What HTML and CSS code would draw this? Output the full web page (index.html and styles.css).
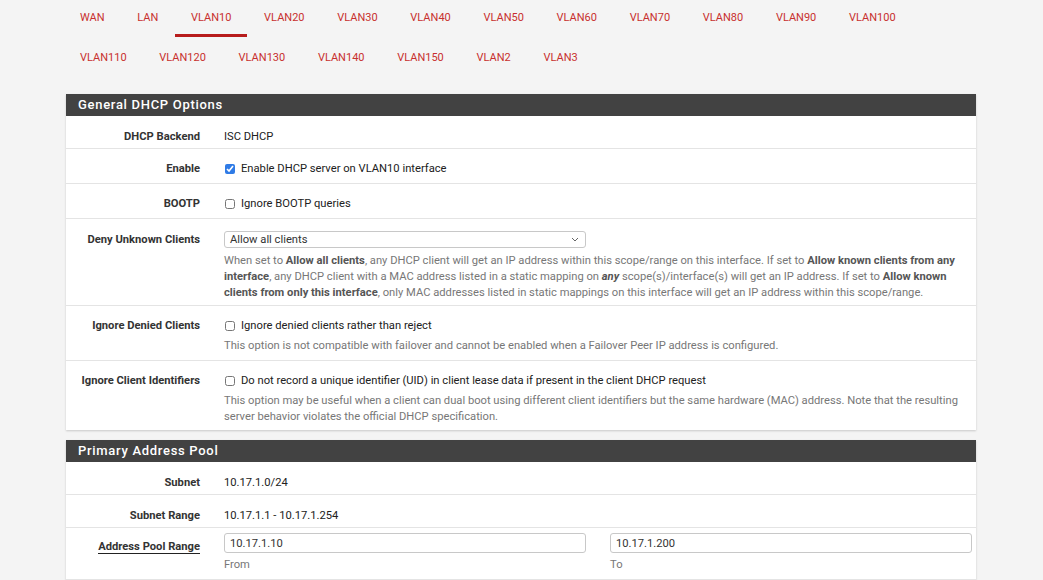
FILE: index.html
```html
<!DOCTYPE html>
<html lang="en">
<head>
<meta charset="utf-8">
<title>DHCP Server</title>
<link rel="stylesheet" href="styles.css">
</head>
<body>
<div class="page">
  <nav class="tabs">
    <a class="tab">WAN</a>
    <a class="tab">LAN</a>
    <a class="tab active">VLAN10</a>
    <a class="tab">VLAN20</a>
    <a class="tab">VLAN30</a>
    <a class="tab">VLAN40</a>
    <a class="tab">VLAN50</a>
    <a class="tab">VLAN60</a>
    <a class="tab">VLAN70</a>
    <a class="tab">VLAN80</a>
    <a class="tab">VLAN90</a>
    <a class="tab">VLAN100</a>
    <a class="tab">VLAN110</a>
    <a class="tab">VLAN120</a>
    <a class="tab">VLAN130</a>
    <a class="tab">VLAN140</a>
    <a class="tab">VLAN150</a>
    <a class="tab">VLAN2</a>
    <a class="tab">VLAN3</a>
  </nav>

  <section class="panel">
    <h2 class="panel-heading">General DHCP Options</h2>
    <div class="row static">
      <div class="label">DHCP Backend</div>
      <div class="value">ISC DHCP</div>
    </div>
    <div class="row check">
      <div class="label">Enable</div>
      <div class="value"><label class="cb"><input type="checkbox" checked><span>Enable DHCP server on VLAN10 interface</span></label></div>
    </div>
    <div class="row check">
      <div class="label">BOOTP</div>
      <div class="value"><label class="cb"><input type="checkbox"><span>Ignore BOOTP queries</span></label></div>
    </div>
    <div class="row select-row">
      <div class="label">Deny Unknown Clients</div>
      <div class="value">
        <div class="select"><span>Allow all clients</span><svg class="chev" width="8" height="5" viewBox="0 0 8 5"><path d="M1 1l3 3 3-3" fill="none" stroke="#666" stroke-width="1"/></svg></div>
        <p class="help help-select">When set to <b>Allow all clients</b>, any DHCP client will get an IP address within this scope/range on this interface. If set to <b>Allow known clients from any interface</b>, any DHCP client with a MAC address listed in a static mapping on <b><i>any</i></b> scope(s)/interface(s) will get an IP address. If set to <b>Allow known clients from only this interface</b>, only MAC addresses listed in static mappings on this interface will get an IP address within this scope/range.</p>
      </div>
    </div>
    <div class="row check help-row">
      <div class="label">Ignore Denied Clients</div>
      <div class="value">
        <label class="cb"><input type="checkbox"><span>Ignore denied clients rather than reject</span></label>
        <p class="help">This option is not compatible with failover and cannot be enabled when a Failover Peer IP address is configured.</p>
      </div>
    </div>
    <div class="row check help-row last">
      <div class="label">Ignore Client Identifiers</div>
      <div class="value">
        <label class="cb"><input type="checkbox"><span>Do not record a unique identifier (UID) in client lease data if present in the client DHCP request</span></label>
        <p class="help">This option may be useful when a client can dual boot using different client identifiers but the same hardware (MAC) address. Note that the resulting server behavior violates the official DHCP specification.</p>
      </div>
    </div>
  </section>

  <section class="panel">
    <h2 class="panel-heading">Primary Address Pool</h2>
    <div class="row static">
      <div class="label">Subnet</div>
      <div class="value">10.17.1.0/24</div>
    </div>
    <div class="row static">
      <div class="label">Subnet Range</div>
      <div class="value">10.17.1.1 - 10.17.1.254</div>
    </div>
    <div class="row range-row">
      <div class="label"><span class="ul">Address Pool Range</span></div>
      <div class="value range">
        <div class="field"><input class="input" type="text" value="10.17.1.10"><span class="sub">From</span></div>
        <div class="field"><input class="input" type="text" value="10.17.1.200"><span class="sub">To</span></div>
      </div>
    </div>
  </section>
</div>
</body>
</html>
```

FILE: styles.css
```css
* { box-sizing: border-box; }
html, body { margin: 0; padding: 0; }
body {
  background: #f4f4f4;
  font-family: Roboto, "Liberation Sans", Arial, sans-serif;
  font-size: 11.2px;
  color: #212121;
  overflow: hidden;
}
.page {
  margin-left: 64px;
  width: 914px;
}
.tabs {
  display: flex;
  flex-wrap: wrap;
  row-gap: 3px;
  column-gap: 0.7px;
}
.tab {
  display: block;
  padding: 1px 16px 0;
  line-height: 33px;
  border-bottom: 3px solid transparent;
  color: #c8302e;
  font-size: 11px;
  cursor: pointer;
}
.tab.active { border-bottom-color: #b71c1c; }

.panel {
  margin: 17px 2px 0;
  background: #fff;
  box-shadow: 0 1px 2px rgba(0,0,0,0.18);
}
.panel + .panel { margin-top: 10px; }
.panel-heading {
  margin: 0;
  height: 22px;
  line-height: 22px;
  padding-left: 12px;
  background: #424242;
  color: #fff;
  font-size: 13px;
  font-weight: 500;
  letter-spacing: 0.7px;
}
.row {
  display: grid;
  grid-template-columns: 152px 1fr;
  border-bottom: 1px solid #e4e4e4;
  padding: 12px 0 6px;
  line-height: 16px;
}
.row.last { border-bottom: 0; padding-bottom: 5px; }
.row.static { padding: 13px 0 3px; }
.label {
  text-align: right;
  padding-right: 18px;
  font-weight: 700;
  color: #333;
}
.value {
  padding: 0 12px 0 6px;
  color: #212121;
}
.cb {
  display: flex;
  align-items: center;
  gap: 6px;
}
.cb input {
  margin: 0 0 0 1px;
  width: 10px;
  height: 10px;
  accent-color: #2f7be6;
}
.help {
  margin: 4px 0 0;
  color: #777;
  line-height: 16px;
}
.help b { color: #555; }
.select-row { padding-bottom: 4px; }
.select-row .label { padding-top: 1px; }
.select {
  width: 362px;
  height: 17px;
  margin-top: 0;
  border: 1px solid #c8c8c8;
  border-radius: 3px;
  display: flex;
  align-items: center;
  justify-content: space-between;
  padding: 0 6px 0 5px;
  color: #333;
  line-height: 15px;
}
.help-select { margin-top: 5px; }
.range-row { padding-top: 5px; padding-bottom: 6px; }
.range-row .label { padding-top: 6px; }
.ul {
  border-bottom: 1px solid #222;
  padding-bottom: 0;
}
.range {
  display: flex;
  gap: 24px;
}
.field {
  display: flex;
  flex-direction: column;
  width: 362px;
}
.input {
  height: 20px;
  width: 100%;
  border: 1px solid #c8c8c8;
  border-radius: 3px;
  padding: 0 5px;
  font: inherit;
  color: #333;
  background: #fff;
}
.sub {
  color: #777;
  margin-top: 4px;
  line-height: 16px;
}
```
